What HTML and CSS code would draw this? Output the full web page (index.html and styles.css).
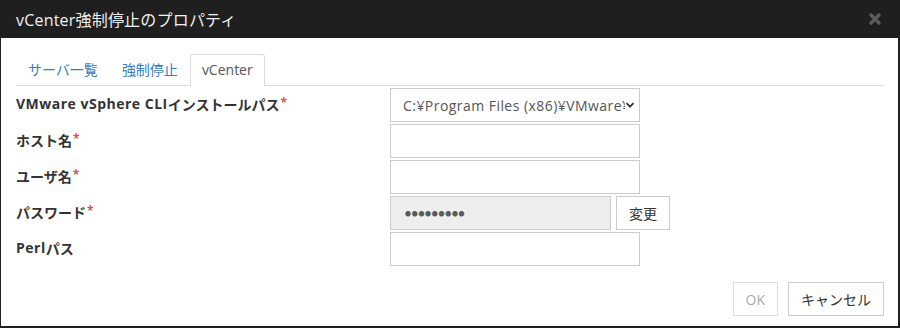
FILE: index.html
```html
<!DOCTYPE html>
<html lang="ja">
<head>
    <meta charset="UTF-8">
    <title>vCenter強制停止のプロパティ</title>
    <link rel="stylesheet" href="styles.css">
</head>
<body>

    <div class="dialog">
        <!-- Kop -->
        <div class="dialog-header">
            <span class="dialog-title">vCenter強制停止のプロパティ</span>
            <svg class="close" width="14" height="14" viewBox="0 0 14 14"><path d="M2 2 L12 12 M12 2 L2 12" stroke="#5c5c5c" stroke-width="3.2"/></svg>
        </div>

        <div class="dialog-body">
            <!-- Tabs -->
            <div class="tabs">
                <span class="tab">サーバ一覧</span>
                <span class="tab">強制停止</span>
                <span class="tab active">vCenter</span>
            </div>

            <!-- Formulier -->
            <div class="form">
                <label class="label"><span class="latin">VMware vSphere CLI</span>インストールパス<span class="req">*</span></label>
                <div class="field select">
                    <span class="select-text">C:¥Program Files (x86)¥VMware¥VMware vSphere CLI</span>
                    <svg class="chevron" width="10" height="10" viewBox="0 0 10 10"><path d="M1.5 3.2 L5 6.7 L8.5 3.2" fill="none" stroke="#333" stroke-width="1.8"/></svg>
                </div>

                <label class="label">ホスト名<span class="req">*</span></label>
                <div class="field"></div>

                <label class="label">ユーザ名<span class="req">*</span></label>
                <div class="field"></div>

                <label class="label">パスワード<span class="req">*</span></label>
                <div class="field-row">
                    <div class="field password">●●●●●●●●●</div>
                    <button class="btn small">変更</button>
                </div>

                <label class="label"><span class="latin">Perl</span>パス</label>
                <div class="field"></div>
            </div>

            <!-- Knoppen -->
            <div class="footer">
                <button class="btn disabled">OK</button>
                <button class="btn">キャンセル</button>
            </div>
        </div>
    </div>

</body>
</html>
```

FILE: styles.css
```css
/* Algemeen */
body {
    margin: 0;
    background-color: #1f1f1f;
    font-family: 'Open Sans', 'Noto Sans CJK JP', sans-serif;
    font-size: 14px;
    color: #333;
}

.dialog {
    width: 900px;
    height: 328px;
    display: flex;
    flex-direction: column;
}

/* Kop */
.dialog-header {
    height: 38px;
    display: flex;
    align-items: center;
    justify-content: space-between;
    padding: 0 18px 0 16px;
    color: #f0f0f0;
}

.dialog-title {
    font-size: 16px;
    letter-spacing: 0.2px;
}

/* Inhoud */
.dialog-body {
    flex: 1;
    background-color: #fff;
    margin: 0 2px 2px 1px;
    padding: 16px 14px 0 15px;
}

.tabs {
    display: flex;
    height: 31px;
    border-bottom: 1px solid #ddd;
}

.tab {
    padding: 0 11px;
    line-height: 30px;
    color: #3a80c0;
    border: 1px solid transparent;
    border-bottom: none;
}

.tab.active {
    color: #555;
    background-color: #fff;
    border-color: #ddd;
    border-radius: 3px 3px 0 0;
    height: 31px;
}

.form {
    display: grid;
    grid-template-columns: 374px 1fr;
    grid-auto-rows: 34px;
    row-gap: 2px;
    margin-top: 2px;
}

.label {
    display: flex;
    align-items: center;
    font-weight: bold;
    padding-bottom: 3px;
}

.latin {
    letter-spacing: 0.5px;
}

.req {
    color: #d9534f;
    font-size: 12px;
    align-self: flex-start;
    margin-top: 6px;
    margin-left: 1px;
}

.field {
    width: 250px;
    height: 34px;
    box-sizing: border-box;
    border: 1px solid #ccc;
    background-color: #fff;
}

.select {
    display: flex;
    align-items: center;
    padding: 0 4px 0 12px;
    overflow: hidden;
}

.select-text {
    flex: 1;
    white-space: nowrap;
    overflow: hidden;
    color: #555;
    letter-spacing: 0.45px;
}

.chevron {
    flex: none;
    background: #fff;
}

.field-row {
    display: flex;
    gap: 5px;
}

.password {
    width: 221px;
    background-color: #eee;
    color: #5a5a5a;
    font-size: 6px;
    letter-spacing: 0.7px;
    display: flex;
    align-items: center;
    padding-left: 14px;
}

/* Knoppen */
.btn {
    font-family: inherit;
    font-size: 14px;
    background-color: #fff;
    color: #333;
    border: 1px solid #ccc;
    height: 34px;
    padding: 0 12px;
    cursor: pointer;
}

.btn.small {
    width: 54px;
    padding: 0;
}

.btn.disabled {
    color: #aaa;
    border-color: #ddd;
    cursor: default;
}

.footer {
    display: flex;
    justify-content: flex-end;
    gap: 10px;
    margin-top: 16px;
}
```
